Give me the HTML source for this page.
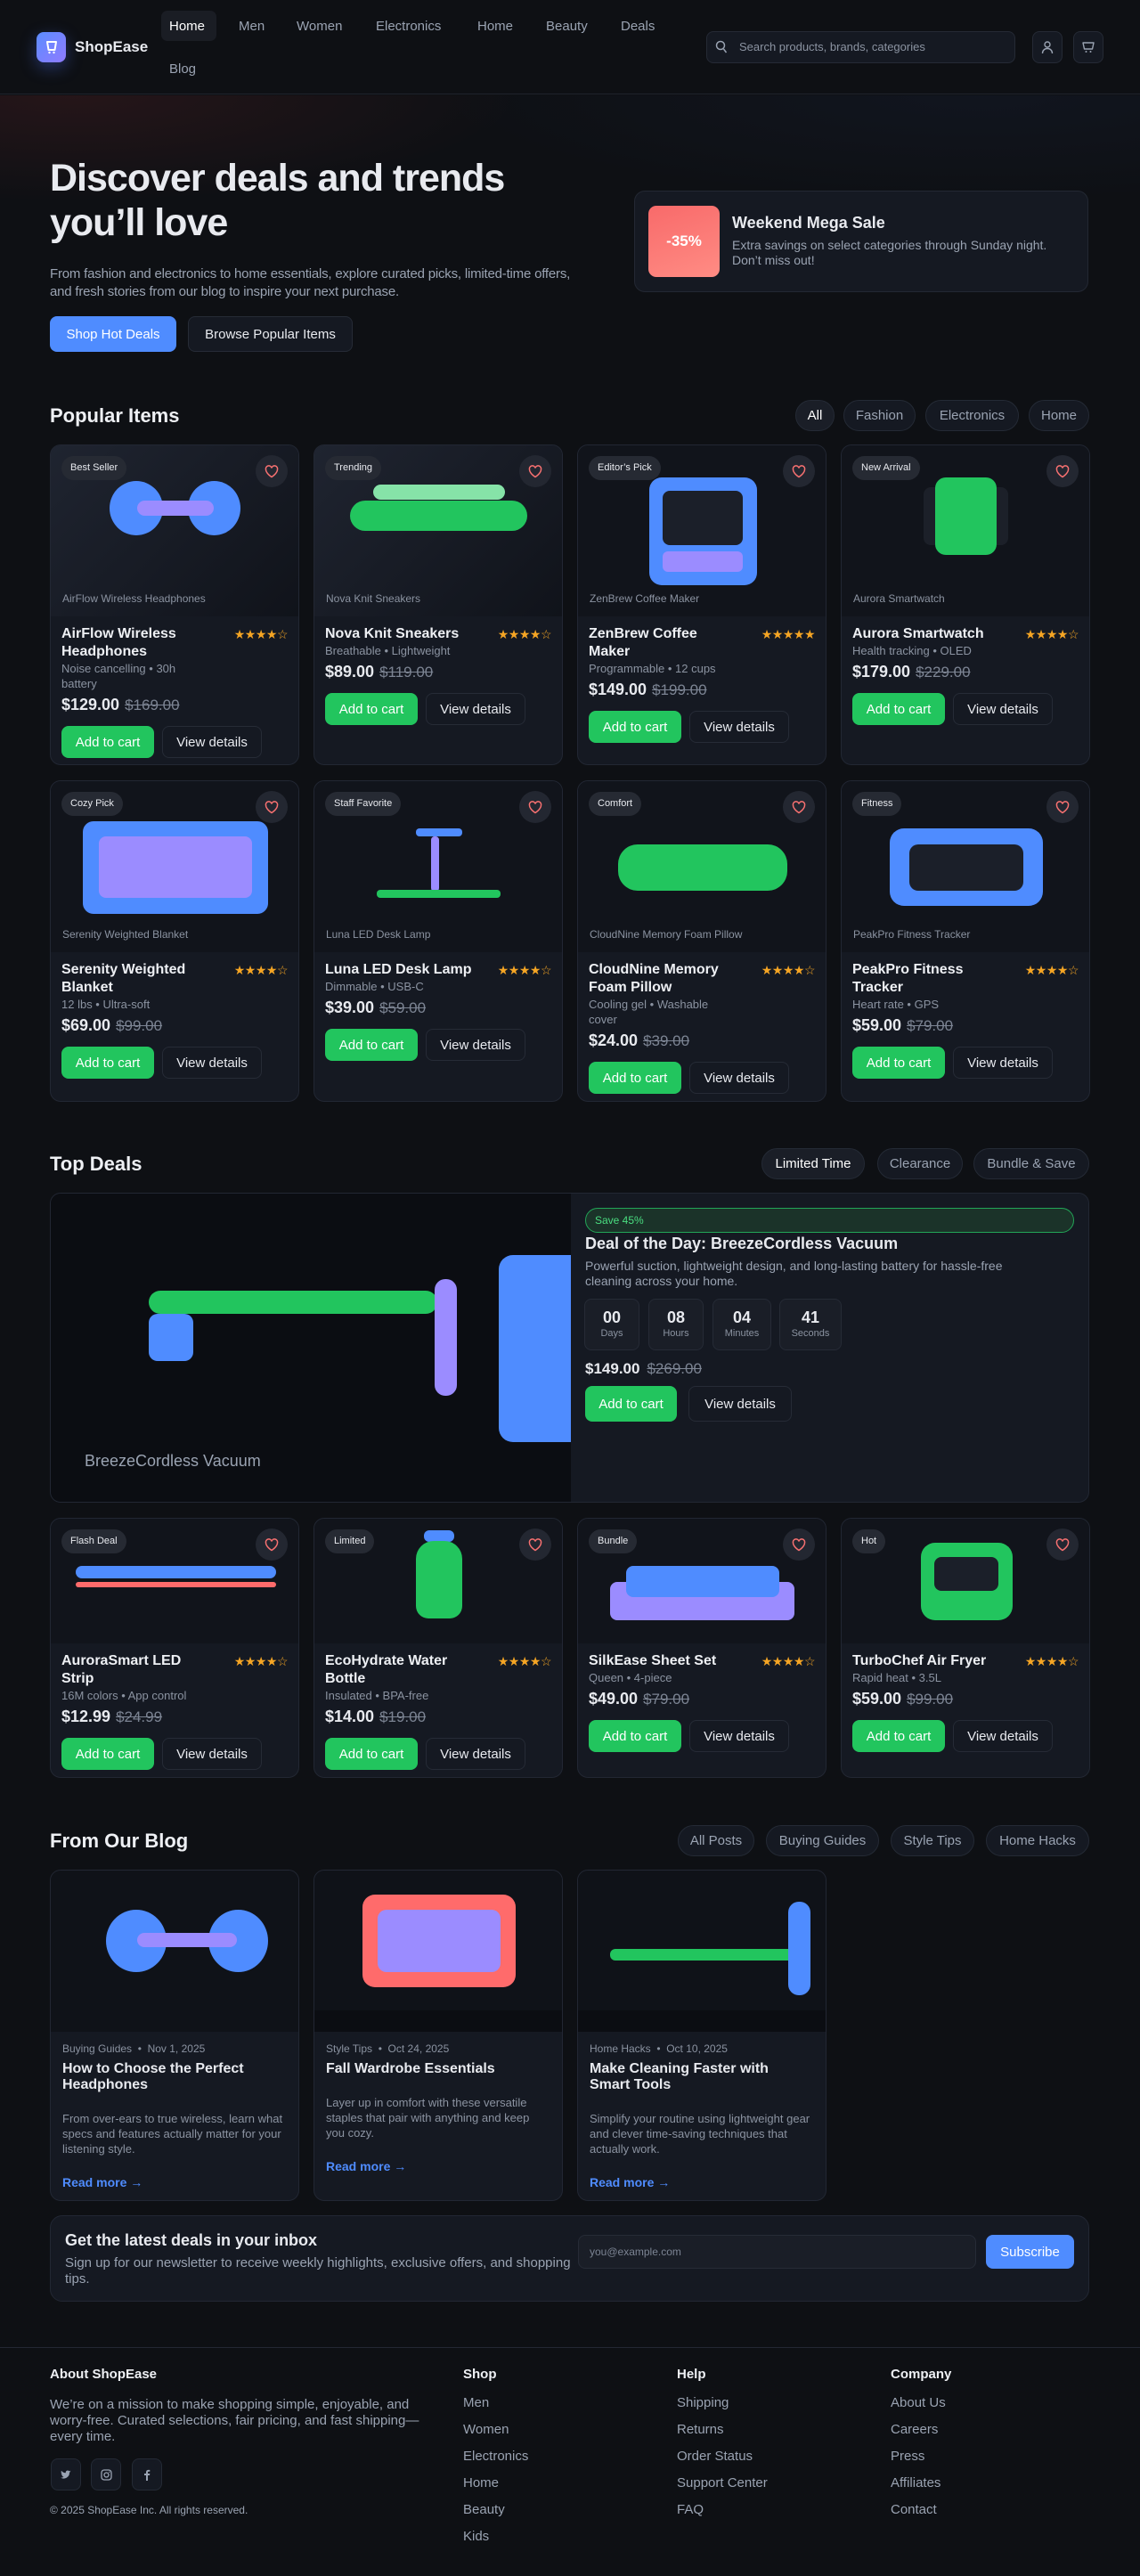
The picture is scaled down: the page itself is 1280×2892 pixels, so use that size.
<!DOCTYPE html>
<html><head><meta charset="utf-8">
<style>
*{box-sizing:border-box;margin:0;padding:0}
body{width:1280px;height:2892px;background:#0e1014;font-family:"Liberation Sans",sans-serif;color:#e8eaef;position:relative;overflow:hidden}
.a{position:absolute}
.nav{left:0;top:0;width:1280px;height:106px;border-bottom:1px solid #1f232c;background:#0e1014}
.nl{font-size:15px;color:#9aa3b2;top:20px;height:20px;line-height:20px}
.glow{left:0;top:107px;width:1280px;height:140px;background:radial-gradient(ellipse 500px 120px at 80px 0,rgba(160,50,50,.16),transparent),radial-gradient(ellipse 600px 120px at 1100px 0,rgba(40,60,110,.12),transparent)}
.btnb{border-radius:8px;font-size:15px;display:flex;align-items:center;justify-content:center}
.pill{height:35px;border:1px solid #242a35;background:#151922;border-radius:18px;font-size:15px;color:#9aa3b2;display:flex;align-items:center;justify-content:center}
.h2{font-size:22px;font-weight:bold;color:#eef0f4;height:28px;line-height:28px}
.card{width:280px;background:#151922;border:1px solid #222733;border-radius:12px;overflow:hidden}
.img{position:relative;height:192px;background:#11141b}
.img.g{background:linear-gradient(135deg,#1f2430,#10131a)}
.img s{position:absolute;display:block;text-decoration:none}
.badge{position:absolute;left:12px;top:12px;height:27px;padding:0 10px;border-radius:14px;background:#262a33;font-size:11px;color:#e8eaef;line-height:27px;z-index:2}
.heart{position:absolute;right:12px;top:11px;width:36px;height:36px;border-radius:18px;background:#232731;display:flex;align-items:center;justify-content:center;z-index:2}
.cap{position:absolute;left:13px;bottom:13px;font-size:12px;color:#8b93a1}
.body{padding:10px 12px 14px 12px}
.row{display:flex;justify-content:space-between}
.t{width:168px;font-size:16px;font-weight:bold;line-height:20px;color:#eef0f4}
.st{font-size:14px;color:#f5a524;line-height:20px;letter-spacing:-0.5px;white-space:nowrap}
.sub{font-size:13px;color:#8b93a1;line-height:17px;font-weight:normal;margin-top:0}
.pr{margin-top:4px;font-size:18px;font-weight:bold;line-height:22px}
.pr del{font-weight:normal;color:#7c8493;font-size:17px;margin-left:6px}
.bt{display:flex;gap:9px;margin-top:12px}
.add{width:104px;height:36px;background:#22c55e;color:#fff;border-radius:8px;font-size:15px;display:flex;align-items:center;justify-content:center}
.vd{width:112px;height:36px;border:1px solid #262b36;color:#e8eaef;border-radius:8px;font-size:15px;display:flex;align-items:center;justify-content:center}
.bc{width:280px;height:372px;background:#151922;border:1px solid #222733;border-radius:12px;overflow:hidden}
.bimg{position:relative;height:181px;background:#0f1218}
.bimg s{position:absolute;display:block}
.bb{padding:11px 13px}
.meta{font-size:12px;color:#8b93a1;line-height:16px}
.bt2{font-size:16px;font-weight:bold;line-height:18px;margin-top:6px;width:235px}
.bd{font-size:13px;color:#8b93a1;line-height:17px;margin-top:20px}
.rm{font-size:14px;color:#4f8cff;font-weight:bold;margin-top:20px;line-height:18px}
.fh{font-size:15px;font-weight:bold;color:#eef0f4}
.fl{font-size:15px;color:#9aa3b2;line-height:30px}
.cd{width:62px;height:58px;border:1px solid #262b36;background:#1a1e27;border-radius:8px;text-align:center;top:1458px}
.cd b{display:block;font-size:18px;margin-top:10px;line-height:20px}
.cd i{display:block;font-style:normal;font-size:11px;color:#8b93a1;margin-top:2px}
.soc{width:34px;height:36px;border:1px solid #242a35;background:#151922;border-radius:8px;top:2760px;display:flex;align-items:center;justify-content:center}
</style></head><body>
<div class="a nav"></div>
<div class="a" style="left:41px;top:36px;width:33px;height:34px;border-radius:8px;background:linear-gradient(135deg,#5b8cff,#8f7bff);box-shadow:0 6px 18px rgba(80,120,255,.35);display:flex;align-items:center;justify-content:center">
<svg width="16" height="16" viewBox="0 0 16 16"><path d="M3 2h10l-1.5 9h-7z" fill="none" stroke="#fff" stroke-width="2" stroke-linejoin="round"/><circle cx="5.5" cy="14" r="1.2" fill="#fff"/><circle cx="10.5" cy="14" r="1.2" fill="#fff"/></svg></div>
<div class="a" style="left:84px;top:42px;font-size:17px;font-weight:bold;line-height:22px">ShopEase</div>
<div class="a" style="left:181px;top:12px;width:62px;height:34px;background:#1a1d24;border-radius:7px"></div>
<div class="a nl" style="left:190px;color:#fff">Home</div>
<div class="a nl" style="left:268px">Men</div>
<div class="a nl" style="left:333px">Women</div>
<div class="a nl" style="left:422px">Electronics</div>
<div class="a nl" style="left:536px">Home</div>
<div class="a nl" style="left:613px">Beauty</div>
<div class="a nl" style="left:697px">Deals</div>
<div class="a nl" style="left:190px;top:68px">Blog</div>
<div class="a" style="left:793px;top:35px;width:347px;height:36px;background:#151922;border:1px solid #252a35;border-radius:8px"></div>
<svg class="a" style="left:803px;top:45px" width="14" height="16" viewBox="0 0 14 16"><circle cx="6" cy="6" r="4.5" fill="none" stroke="#9aa3b2" stroke-width="1.5"/><path d="M9.5 10l3 4" stroke="#9aa3b2" stroke-width="1.5"/></svg>
<div class="a" style="left:830px;top:45px;font-size:13px;color:#8b93a1;line-height:16px">Search products, brands, categories</div>
<div class="a" style="left:1159px;top:35px;width:34px;height:36px;border:1px solid #252a35;background:#151922;border-radius:8px;display:flex;align-items:center;justify-content:center"><svg width="14" height="16" viewBox="0 0 14 16"><circle cx="7" cy="5" r="3" fill="none" stroke="#9aa3b2" stroke-width="1.4"/><path d="M1.5 15c0-3.5 2.5-5.5 5.5-5.5s5.5 2 5.5 5.5" fill="none" stroke="#9aa3b2" stroke-width="1.4"/></svg></div>
<div class="a" style="left:1205px;top:35px;width:34px;height:36px;border:1px solid #252a35;background:#151922;border-radius:8px;display:flex;align-items:center;justify-content:center"><svg width="14" height="14" viewBox="0 0 14 14"><path d="M1 2h12l-1.5 7h-9z" fill="none" stroke="#9aa3b2" stroke-width="1.4" stroke-linejoin="round"/><circle cx="4.5" cy="12" r="1" fill="#9aa3b2"/><circle cx="9.5" cy="12" r="1" fill="#9aa3b2"/></svg></div>
<div class="a glow"></div>

<div class="a" style="left:56px;top:175px;font-size:43px;font-weight:bold;line-height:50px;letter-spacing:-1px;width:590px">Discover deals and trends you’ll love</div>
<div class="a" style="left:56px;top:298px;width:612px;font-size:15px;line-height:20px;color:#9aa3b2;letter-spacing:-0.2px">From fashion and electronics to home essentials, explore curated picks, limited-time offers, and fresh stories from our blog to inspire your next purchase.</div>
<div class="a btnb" style="left:56px;top:355px;width:142px;height:40px;background:#4f8cff;color:#fff">Shop Hot Deals</div>
<div class="a btnb" style="left:211px;top:355px;width:185px;height:40px;background:#151922;border:1px solid #262b36">Browse Popular Items</div>
<div class="a" style="left:712px;top:214px;width:510px;height:114px;background:#151922;border:1px solid #232833;border-radius:12px"></div>
<div class="a" style="left:728px;top:231px;width:80px;height:80px;border-radius:9px;background:linear-gradient(160deg,#f86a6a,#ff8c84);display:flex;align-items:center;justify-content:center;font-size:17px;font-weight:bold;color:#fff">-35%</div>
<div class="a" style="left:822px;top:239px;font-size:18px;font-weight:bold;line-height:22px">Weekend Mega Sale</div>
<div class="a" style="left:822px;top:267px;width:370px;font-size:14px;line-height:17px;color:#9aa3b2">Extra savings on select categories through Sunday night. Don’t miss out!</div>

<div class="a h2" style="left:56px;top:453px">Popular Items</div>
<div class="a pill" style="left:893px;top:449px;width:44px;color:#fff;background:#1a1e27">All</div>
<div class="a pill" style="left:947px;top:449px;width:81px">Fashion</div>
<div class="a pill" style="left:1039px;top:449px;width:105px">Electronics</div>
<div class="a pill" style="left:1155px;top:449px;width:68px">Home</div>

<!-- Row 1 -->
<div class="a card" style="left:56px;top:499px;height:360px"><div class="img g"><span class="badge">Best Seller</span><span class="heart"><svg width="16" height="15" viewBox="0 0 16 15"><path d="M8 13.5S1.5 9.5 1.5 5A3.3 3.3 0 0 1 8 3.5 3.3 3.3 0 0 1 14.5 5C14.5 9.5 8 13.5 8 13.5z" fill="none" stroke="#f87171" stroke-width="1.5"/></svg></span>
<s style="left:66px;top:40px;width:60px;height:61px;border-radius:50%;background:#4f8cff"></s><s style="left:154px;top:40px;width:59px;height:61px;border-radius:50%;background:#4f8cff"></s><s style="left:97px;top:62px;width:86px;height:17px;border-radius:9px;background:#9b8cff"></s>
<span class="cap">AirFlow Wireless Headphones</span></div>
<div class="body"><div class="row"><div class="t">AirFlow Wireless Headphones<div class="sub">Noise cancelling • 30h battery</div></div><div class="st">★★★★☆</div></div><div class="pr">$129.00<del>$169.00</del></div><div class="bt"><div class="add">Add to cart</div><div class="vd">View details</div></div></div></div>

<div class="a card" style="left:352px;top:499px;height:360px"><div class="img g"><span class="badge">Trending</span><span class="heart"><svg width="16" height="15" viewBox="0 0 16 15"><path d="M8 13.5S1.5 9.5 1.5 5A3.3 3.3 0 0 1 8 3.5 3.3 3.3 0 0 1 14.5 5C14.5 9.5 8 13.5 8 13.5z" fill="none" stroke="#f87171" stroke-width="1.5"/></svg></span>
<s style="left:66px;top:44px;width:148px;height:17px;border-radius:9px;background:#86e3a8"></s><s style="left:40px;top:62px;width:199px;height:34px;border-radius:17px;background:#22c55e"></s>
<span class="cap">Nova Knit Sneakers</span></div>
<div class="body"><div class="row"><div class="t">Nova Knit Sneakers<div class="sub">Breathable • Lightweight</div></div><div class="st">★★★★☆</div></div><div class="pr">$89.00<del>$119.00</del></div><div class="bt"><div class="add">Add to cart</div><div class="vd">View details</div></div></div></div>

<div class="a card" style="left:648px;top:499px;height:360px"><div class="img"><span class="badge">Editor’s Pick</span><span class="heart"><svg width="16" height="15" viewBox="0 0 16 15"><path d="M8 13.5S1.5 9.5 1.5 5A3.3 3.3 0 0 1 8 3.5 3.3 3.3 0 0 1 14.5 5C14.5 9.5 8 13.5 8 13.5z" fill="none" stroke="#f87171" stroke-width="1.5"/></svg></span>
<s style="left:80px;top:36px;width:121px;height:121px;border-radius:14px;background:#4f8cff"></s><s style="left:95px;top:51px;width:90px;height:61px;border-radius:8px;background:#1b1f29"></s><s style="left:95px;top:119px;width:90px;height:23px;border-radius:6px;background:#9b8cff"></s>
<span class="cap">ZenBrew Coffee Maker</span></div>
<div class="body"><div class="row"><div class="t">ZenBrew Coffee Maker<div class="sub">Programmable • 12 cups</div></div><div class="st">★★★★★</div></div><div class="pr">$149.00<del>$199.00</del></div><div class="bt"><div class="add">Add to cart</div><div class="vd">View details</div></div></div></div>

<div class="a card" style="left:944px;top:499px;height:360px"><div class="img"><span class="badge">New Arrival</span><span class="heart"><svg width="16" height="15" viewBox="0 0 16 15"><path d="M8 13.5S1.5 9.5 1.5 5A3.3 3.3 0 0 1 8 3.5 3.3 3.3 0 0 1 14.5 5C14.5 9.5 8 13.5 8 13.5z" fill="none" stroke="#f87171" stroke-width="1.5"/></svg></span>
<s style="left:92px;top:47px;width:95px;height:65px;border-radius:8px;background:#1c2029"></s><s style="left:105px;top:36px;width:69px;height:87px;border-radius:12px;background:#22c55e"></s>
<span class="cap">Aurora Smartwatch</span></div>
<div class="body"><div class="row"><div class="t">Aurora Smartwatch<div class="sub">Health tracking • OLED</div></div><div class="st">★★★★☆</div></div><div class="pr">$179.00<del>$229.00</del></div><div class="bt"><div class="add">Add to cart</div><div class="vd">View details</div></div></div></div>

<!-- Row 2 -->
<div class="a card" style="left:56px;top:876px;height:361px"><div class="img"><span class="badge">Cozy Pick</span><span class="heart"><svg width="16" height="15" viewBox="0 0 16 15"><path d="M8 13.5S1.5 9.5 1.5 5A3.3 3.3 0 0 1 8 3.5 3.3 3.3 0 0 1 14.5 5C14.5 9.5 8 13.5 8 13.5z" fill="none" stroke="#f87171" stroke-width="1.5"/></svg></span>
<s style="left:36px;top:45px;width:208px;height:104px;border-radius:12px;background:#4f8cff"></s><s style="left:54px;top:62px;width:172px;height:69px;border-radius:8px;background:#9b8cff"></s>
<span class="cap">Serenity Weighted Blanket</span></div>
<div class="body"><div class="row"><div class="t">Serenity Weighted Blanket<div class="sub">12 lbs • Ultra-soft</div></div><div class="st">★★★★☆</div></div><div class="pr">$69.00<del>$99.00</del></div><div class="bt"><div class="add">Add to cart</div><div class="vd">View details</div></div></div></div>

<div class="a card" style="left:352px;top:876px;height:361px"><div class="img"><span class="badge">Staff Favorite</span><span class="heart"><svg width="16" height="15" viewBox="0 0 16 15"><path d="M8 13.5S1.5 9.5 1.5 5A3.3 3.3 0 0 1 8 3.5 3.3 3.3 0 0 1 14.5 5C14.5 9.5 8 13.5 8 13.5z" fill="none" stroke="#f87171" stroke-width="1.5"/></svg></span>
<s style="left:131px;top:62px;width:9px;height:62px;border-radius:4px;background:#9b8cff"></s><s style="left:114px;top:53px;width:52px;height:9px;border-radius:4px;background:#4f8cff"></s><s style="left:70px;top:122px;width:139px;height:9px;border-radius:4px;background:#22c55e"></s>
<span class="cap">Luna LED Desk Lamp</span></div>
<div class="body"><div class="row"><div class="t">Luna LED Desk Lamp<div class="sub">Dimmable • USB-C</div></div><div class="st">★★★★☆</div></div><div class="pr">$39.00<del>$59.00</del></div><div class="bt"><div class="add">Add to cart</div><div class="vd">View details</div></div></div></div>

<div class="a card" style="left:648px;top:876px;height:361px"><div class="img"><span class="badge">Comfort</span><span class="heart"><svg width="16" height="15" viewBox="0 0 16 15"><path d="M8 13.5S1.5 9.5 1.5 5A3.3 3.3 0 0 1 8 3.5 3.3 3.3 0 0 1 14.5 5C14.5 9.5 8 13.5 8 13.5z" fill="none" stroke="#f87171" stroke-width="1.5"/></svg></span>
<s style="left:45px;top:71px;width:190px;height:52px;border-radius:22px;background:#22c55e"></s>
<span class="cap">CloudNine Memory Foam Pillow</span></div>
<div class="body"><div class="row"><div class="t">CloudNine Memory Foam Pillow<div class="sub">Cooling gel • Washable cover</div></div><div class="st">★★★★☆</div></div><div class="pr">$24.00<del>$39.00</del></div><div class="bt"><div class="add">Add to cart</div><div class="vd">View details</div></div></div></div>

<div class="a card" style="left:944px;top:876px;height:361px"><div class="img"><span class="badge">Fitness</span><span class="heart"><svg width="16" height="15" viewBox="0 0 16 15"><path d="M8 13.5S1.5 9.5 1.5 5A3.3 3.3 0 0 1 8 3.5 3.3 3.3 0 0 1 14.5 5C14.5 9.5 8 13.5 8 13.5z" fill="none" stroke="#f87171" stroke-width="1.5"/></svg></span>
<s style="left:54px;top:53px;width:172px;height:87px;border-radius:16px;background:#4f8cff"></s><s style="left:76px;top:71px;width:128px;height:52px;border-radius:10px;background:#1b1f29"></s>
<span class="cap">PeakPro Fitness Tracker</span></div>
<div class="body"><div class="row"><div class="t">PeakPro Fitness Tracker<div class="sub">Heart rate • GPS</div></div><div class="st">★★★★☆</div></div><div class="pr">$59.00<del>$79.00</del></div><div class="bt"><div class="add">Add to cart</div><div class="vd">View details</div></div></div></div>

<!-- Top Deals -->
<div class="a h2" style="left:56px;top:1293px">Top Deals</div>
<div class="a pill" style="left:855px;top:1289px;width:116px;color:#fff;background:#1a1e27">Limited Time</div>
<div class="a pill" style="left:985px;top:1289px;width:96px">Clearance</div>
<div class="a pill" style="left:1093px;top:1289px;width:130px">Bundle &amp; Save</div>
<div class="a" style="left:56px;top:1339px;width:1167px;height:348px;border:1px solid #222733;border-radius:12px;overflow:hidden;background:#151922">
<div class="a" style="left:0;top:0;width:584px;height:348px;background:#0b0d12">
<div class="a" style="left:110px;top:109px;width:324px;height:26px;border-radius:13px;background:#22c55e"></div>
<div class="a" style="left:110px;top:135px;width:50px;height:53px;border-radius:10px;background:#4f8cff"></div>
<div class="a" style="left:431px;top:96px;width:25px;height:131px;border-radius:12px;background:#9b8cff"></div>
<div class="a" style="left:503px;top:69px;width:81px;height:210px;border-radius:16px 0 0 16px;background:#4f8cff"></div>
<div class="a" style="left:38px;top:289px;font-size:18px;color:#9aa3b2;line-height:22px">BreezeCordless Vacuum</div>
</div></div>
<div class="a" style="left:657px;top:1356px;width:549px;height:28px;border:1px solid #22a557;background:#1b3329;border-radius:14px;font-size:12px;color:#4ade80;line-height:26px;padding-left:10px">Save 45%</div>
<div class="a" style="left:657px;top:1385px;font-size:18px;font-weight:bold;line-height:22px">Deal of the Day: BreezeCordless Vacuum</div>
<div class="a" style="left:657px;top:1413px;width:520px;font-size:14px;line-height:17px;color:#9aa3b2">Powerful suction, lightweight design, and long-lasting battery for hassle-free cleaning across your home.</div>
<div class="a cd" style="left:656px"><b>00</b><i>Days</i></div>
<div class="a cd" style="left:728px"><b>08</b><i>Hours</i></div>
<div class="a cd" style="left:800px;width:66px"><b>04</b><i>Minutes</i></div>
<div class="a cd" style="left:875px;width:70px"><b>41</b><i>Seconds</i></div>
<div class="a" style="left:657px;top:1526px;font-size:17px;font-weight:bold;line-height:22px">$149.00<del style="font-weight:normal;color:#7c8493;margin-left:8px">$269.00</del></div>
<div class="a add" style="left:657px;top:1556px;width:103px;height:40px">Add to cart</div>
<div class="a vd" style="left:773px;top:1556px;width:116px;height:40px">View details</div>

<!-- Row 3 -->
<div class="a card" style="left:56px;top:1704px;height:292px"><div class="img" style="height:140px"><span class="badge">Flash Deal</span><span class="heart"><svg width="16" height="15" viewBox="0 0 16 15"><path d="M8 13.5S1.5 9.5 1.5 5A3.3 3.3 0 0 1 8 3.5 3.3 3.3 0 0 1 14.5 5C14.5 9.5 8 13.5 8 13.5z" fill="none" stroke="#f87171" stroke-width="1.5"/></svg></span>
<s style="left:28px;top:53px;width:225px;height:14px;border-radius:7px;background:#4f8cff"></s><s style="left:28px;top:71px;width:225px;height:6px;border-radius:3px;background:#ff6b6b"></s></div>
<div class="body"><div class="row"><div class="t">AuroraSmart LED Strip<div class="sub">16M colors • App control</div></div><div class="st">★★★★☆</div></div><div class="pr">$12.99<del>$24.99</del></div><div class="bt"><div class="add">Add to cart</div><div class="vd">View details</div></div></div></div>

<div class="a card" style="left:352px;top:1704px;height:292px"><div class="img" style="height:140px"><span class="badge">Limited</span><span class="heart"><svg width="16" height="15" viewBox="0 0 16 15"><path d="M8 13.5S1.5 9.5 1.5 5A3.3 3.3 0 0 1 8 3.5 3.3 3.3 0 0 1 14.5 5C14.5 9.5 8 13.5 8 13.5z" fill="none" stroke="#f87171" stroke-width="1.5"/></svg></span>
<s style="left:123px;top:13px;width:34px;height:13px;border-radius:6px;background:#4f8cff"></s><s style="left:114px;top:25px;width:52px;height:87px;border-radius:20px 20px 14px 14px;background:#22c55e"></s></div>
<div class="body"><div class="row"><div class="t">EcoHydrate Water Bottle<div class="sub">Insulated • BPA-free</div></div><div class="st">★★★★☆</div></div><div class="pr">$14.00<del>$19.00</del></div><div class="bt"><div class="add">Add to cart</div><div class="vd">View details</div></div></div></div>

<div class="a card" style="left:648px;top:1704px;height:292px"><div class="img" style="height:140px"><span class="badge">Bundle</span><span class="heart"><svg width="16" height="15" viewBox="0 0 16 15"><path d="M8 13.5S1.5 9.5 1.5 5A3.3 3.3 0 0 1 8 3.5 3.3 3.3 0 0 1 14.5 5C14.5 9.5 8 13.5 8 13.5z" fill="none" stroke="#f87171" stroke-width="1.5"/></svg></span>
<s style="left:36px;top:71px;width:207px;height:43px;border-radius:8px;background:#9b8cff"></s><s style="left:54px;top:53px;width:172px;height:35px;border-radius:8px;background:#4f8cff"></s></div>
<div class="body"><div class="row"><div class="t">SilkEase Sheet Set<div class="sub">Queen • 4-piece</div></div><div class="st">★★★★☆</div></div><div class="pr">$49.00<del>$79.00</del></div><div class="bt"><div class="add">Add to cart</div><div class="vd">View details</div></div></div></div>

<div class="a card" style="left:944px;top:1704px;height:292px"><div class="img" style="height:140px"><span class="badge">Hot</span><span class="heart"><svg width="16" height="15" viewBox="0 0 16 15"><path d="M8 13.5S1.5 9.5 1.5 5A3.3 3.3 0 0 1 8 3.5 3.3 3.3 0 0 1 14.5 5C14.5 9.5 8 13.5 8 13.5z" fill="none" stroke="#f87171" stroke-width="1.5"/></svg></span>
<s style="left:89px;top:27px;width:103px;height:87px;border-radius:16px;background:#22c55e"></s><s style="left:104px;top:43px;width:72px;height:38px;border-radius:8px;background:#1b1f29"></s></div>
<div class="body"><div class="row"><div class="t">TurboChef Air Fryer<div class="sub">Rapid heat • 3.5L</div></div><div class="st">★★★★☆</div></div><div class="pr">$59.00<del>$99.00</del></div><div class="bt"><div class="add">Add to cart</div><div class="vd">View details</div></div></div></div>

<!-- Blog -->
<div class="a h2" style="left:56px;top:2053px">From Our Blog</div>
<div class="a pill" style="left:761px;top:2049px;width:86px">All Posts</div>
<div class="a pill" style="left:860px;top:2049px;width:127px">Buying Guides</div>
<div class="a pill" style="left:1000px;top:2049px;width:94px">Style Tips</div>
<div class="a pill" style="left:1107px;top:2049px;width:116px">Home Hacks</div>

<div class="a bc" style="left:56px;top:2099px"><div class="bimg">
<s style="left:62px;top:44px;width:68px;height:70px;border-radius:50%;background:#4f8cff"></s><s style="left:177px;top:44px;width:67px;height:70px;border-radius:50%;background:#4f8cff"></s><s style="left:97px;top:70px;width:112px;height:16px;border-radius:8px;background:#9b8cff"></s></div>
<div class="bb"><div class="meta">Buying Guides &nbsp;•&nbsp; Nov 1, 2025</div><div class="bt2">How to Choose the Perfect Headphones</div><div class="bd">From over-ears to true wireless, learn what specs and features actually matter for your listening style.</div><div class="rm">Read more →</div></div></div>

<div class="a bc" style="left:352px;top:2099px"><div class="bimg" style="background:linear-gradient(#0f1218 157px,#0b0d12 157px)">
<s style="left:54px;top:27px;width:172px;height:104px;border-radius:14px;background:#ff6b6b"></s><s style="left:71px;top:44px;width:138px;height:70px;border-radius:10px;background:#9b8cff"></s></div>
<div class="bb"><div class="meta">Style Tips &nbsp;•&nbsp; Oct 24, 2025</div><div class="bt2">Fall Wardrobe Essentials</div><div class="bd">Layer up in comfort with these versatile staples that pair with anything and keep you cozy.</div><div class="rm">Read more →</div></div></div>

<div class="a bc" style="left:648px;top:2099px"><div class="bimg" style="background:linear-gradient(#0f1218 157px,#0b0d12 157px)">
<s style="left:36px;top:88px;width:206px;height:13px;border-radius:6px;background:#22c55e"></s><s style="left:236px;top:35px;width:25px;height:105px;border-radius:12px;background:#4f8cff"></s></div>
<div class="bb"><div class="meta">Home Hacks &nbsp;•&nbsp; Oct 10, 2025</div><div class="bt2" style="width:215px">Make Cleaning Faster with Smart Tools</div><div class="bd">Simplify your routine using lightweight gear and clever time-saving techniques that actually work.</div><div class="rm">Read more →</div></div></div>

<!-- Newsletter -->
<div class="a" style="left:56px;top:2487px;width:1167px;height:97px;background:#151922;border:1px solid #222733;border-radius:14px"></div>
<div class="a" style="left:73px;top:2504px;font-size:18px;font-weight:bold;line-height:22px">Get the latest deals in your inbox</div>
<div class="a" style="left:73px;top:2532px;width:570px;font-size:15px;line-height:18px;color:#9aa3b2">Sign up for our newsletter to receive weekly highlights, exclusive offers, and shopping tips.</div>
<div class="a" style="left:649px;top:2509px;width:447px;height:38px;background:#1a1e27;border:1px solid #262b36;border-radius:8px;font-size:12px;color:#7c8493;line-height:36px;padding-left:12px">you@example.com</div>
<div class="a btnb" style="left:1107px;top:2509px;width:99px;height:38px;background:#4f8cff;color:#fff">Subscribe</div>

<!-- Footer -->
<div class="a" style="left:0;top:2635px;width:1280px;height:1px;background:#232833"></div>
<div class="a fh" style="left:56px;top:2657px">About ShopEase</div>
<div class="a" style="left:56px;top:2691px;width:445px;font-size:15px;line-height:18px;color:#9aa3b2">We’re on a mission to make shopping simple, enjoyable, and worry-free. Curated selections, fair pricing, and fast shipping—every time.</div>
<div class="a soc" style="left:57px"><svg width="12" height="11" viewBox="0 0 12 11"><path d="M11.5 1.5c-.4.2-.9.3-1.3.4.5-.3.8-.7 1-1.3-.5.3-1 .5-1.5.6A2.3 2.3 0 0 0 5.8 3.3 6.5 6.5 0 0 1 1 .9a2.3 2.3 0 0 0 .7 3.1c-.4 0-.7-.1-1-.3 0 1.1.8 2.1 1.8 2.3-.3.1-.7.1-1 0 .3.9 1.1 1.6 2.1 1.6A4.6 4.6 0 0 1 0 8.5 6.5 6.5 0 0 0 10 3v-.3c.6-.4 1.1-.8 1.5-1.2z" fill="#9aa3b2"/></svg></div>
<div class="a soc" style="left:102px"><svg width="13" height="13" viewBox="0 0 13 13"><rect x="1" y="1" width="11" height="11" rx="3" fill="none" stroke="#9aa3b2" stroke-width="1.3"/><circle cx="6.5" cy="6.5" r="2.5" fill="none" stroke="#9aa3b2" stroke-width="1.3"/><circle cx="9.7" cy="3.3" r=".7" fill="#9aa3b2"/></svg></div>
<div class="a soc" style="left:148px"><svg width="8" height="13" viewBox="0 0 8 13"><path d="M5 13V7h2l.3-2H5V3.8c0-.6.2-1 1-1h1.3V1C7 .9 6.4.9 5.8.9 4.3.9 3 1.8 3 3.5V5H1v2h2v6z" fill="#9aa3b2"/></svg></div>
<div class="a" style="left:56px;top:2811px;font-size:12px;color:#9aa3b2">© 2025 ShopEase Inc. All rights reserved.</div>
<div class="a fh" style="left:520px;top:2657px">Shop</div>
<div class="a fl" style="left:520px;top:2683px">Men<br>Women<br>Electronics<br>Home<br>Beauty<br>Kids</div>
<div class="a fh" style="left:760px;top:2657px">Help</div>
<div class="a fl" style="left:760px;top:2683px">Shipping<br>Returns<br>Order Status<br>Support Center<br>FAQ</div>
<div class="a fh" style="left:1000px;top:2657px">Company</div>
<div class="a fl" style="left:1000px;top:2683px">About Us<br>Careers<br>Press<br>Affiliates<br>Contact</div>
</body></html>
